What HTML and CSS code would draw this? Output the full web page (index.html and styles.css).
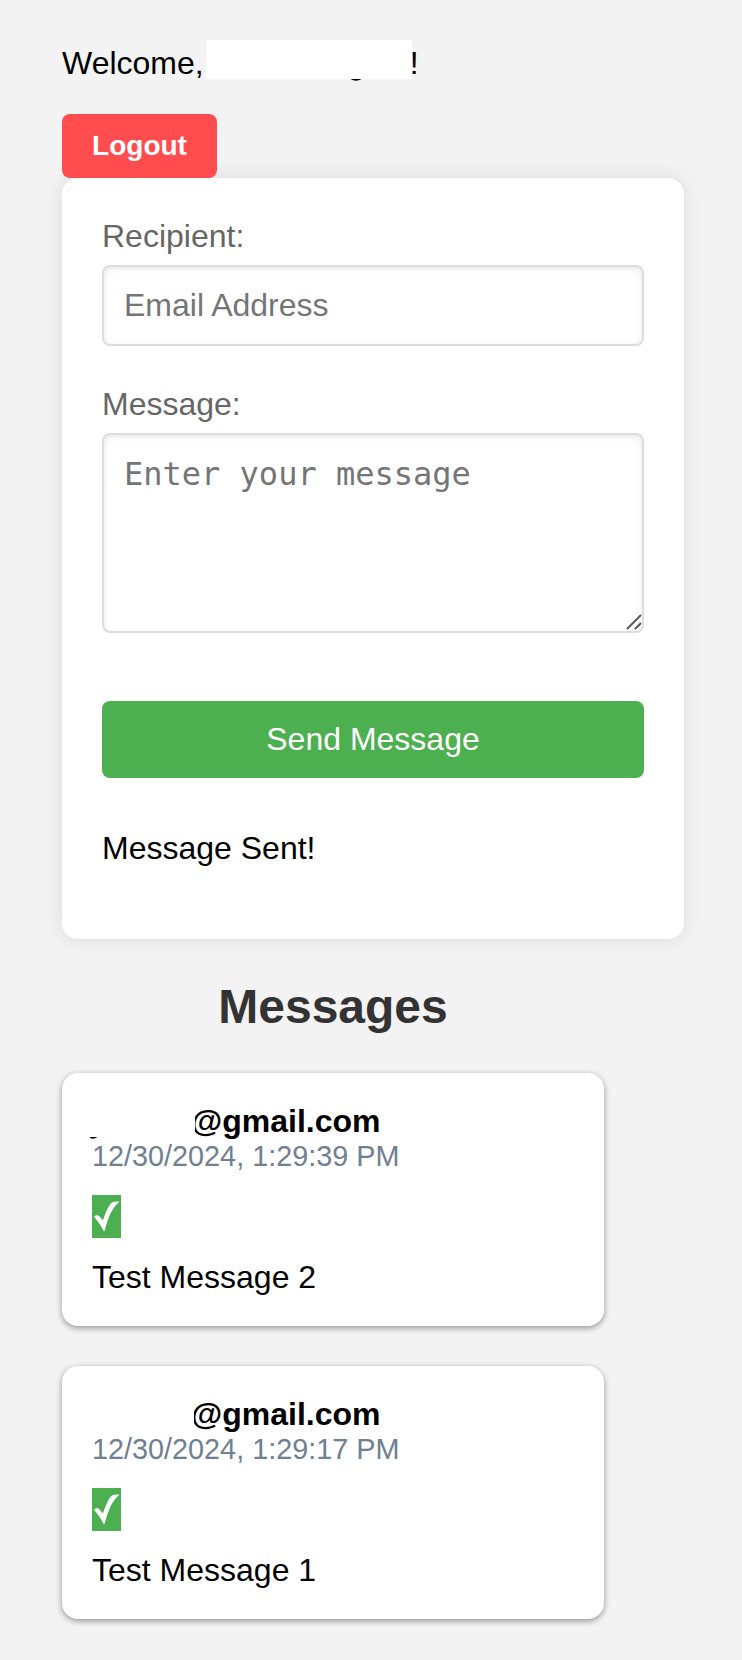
FILE: index.html
```html
<!DOCTYPE html>
<html lang="en">
<head>
<meta charset="utf-8">
<title>Messages</title>
<link rel="stylesheet" href="styles.css">
</head>
<body>
<header class="welcome"><span>Welcome,</span><span class="name-mask"><svg class="descender" width="12" height="3" viewBox="0 0 12 3"><path d="M0.5 0Q6 3.4 11.5 0Z"/></svg></span><span class="bang">!</span></header>
<button class="logout" type="button">Logout</button>
<form class="form-card">
  <label class="label" for="recipient">Recipient:</label>
  <input class="field" id="recipient" type="text" placeholder="Email Address">
  <label class="label" for="message">Message:</label>
  <div class="area">
    <textarea class="field field-area" id="message" placeholder="Enter your message"></textarea>
    <svg class="grip" width="16" height="16" viewBox="0 0 16 16"><path d="M1 15L15 1M9 15L15 9"/></svg>
  </div>
  <button class="send" type="button">Send Message</button>
  <p class="status">Message Sent!</p>
</form>
<main class="messages">
  <h2 class="heading">Messages</h2>
  <article class="message">
    <div class="sender"><span class="sender-mask"></span>@gmail.com<svg class="tail" width="8" height="2" viewBox="0 0 8 2"><path d="M0 0H7.5Q3 3 0 1Z"/></svg></div>
    <time class="time">12/30/2024, 1:29:39 PM</time>
    <div class="check"><svg width="29" height="43" viewBox="0 0 29 43"><path d="M1.8 21.8C3.5 19.7 6 19.8 7.3 21.2L11 25.2C13.3 18.5 15.5 12.5 18.5 9C20.5 6.7 23.5 6.3 27.5 6.8C20.5 12.5 16.5 21 12.6 36H11.6C9 30.5 5.5 25.5 1.8 21.8Z"/></svg></div>
    <p class="text">Test Message 2</p>
  </article>
  <article class="message">
    <div class="sender"><span class="sender-mask sender-mask-short"></span>@gmail.com</div>
    <time class="time">12/30/2024, 1:29:17 PM</time>
    <div class="check"><svg width="29" height="43" viewBox="0 0 29 43"><path d="M1.8 21.8C3.5 19.7 6 19.8 7.3 21.2L11 25.2C13.3 18.5 15.5 12.5 18.5 9C20.5 6.7 23.5 6.3 27.5 6.8C20.5 12.5 16.5 21 12.6 36H11.6C9 30.5 5.5 25.5 1.8 21.8Z"/></svg></div>
    <p class="text">Test Message 1</p>
  </article>
</main>
</body>
</html>
```
FILE: styles.css
```css
* { box-sizing: border-box; }
html { background: #f3f3f3; }
body {
  margin: 0;
  padding: 45px 58px 0 62px;
  min-height: 1660px;
  background: #f3f3f3;
  color: #000;
  font: 32px/37px "Liberation Sans", Arial, sans-serif;
}
p, h2 { margin: 0; }
.welcome { display: flex; height: 37px; }
.name-mask {
  position: relative;
  width: 206px;
  height: 39px;
  margin: -5px 0 0 2px;
  background: #fff;
}
.descender { position: absolute; left: 144px; top: 39px; }
.bang { margin-left: -2px; }
.logout {
  position: relative;
  z-index: 1;
  display: block;
  margin: 32px 0 0;
  padding: 16px 0;
  width: 155px;
  height: 64px;
  border: 0;
  border-radius: 8px;
  background: #ff4d4f;
  color: #fff;
  font: bold 28px/32px "Liberation Sans", Arial, sans-serif;
}
.form-card {
  display: flex;
  flex-direction: column;
  height: 761px;
  padding: 40px;
  border-radius: 16px;
  background: #fff;
  box-shadow: 0 0 20px rgba(0, 0, 0, .1);
}
.label { margin-bottom: 10px; color: #666; }
.field {
  display: block;
  width: 100%;
  height: 81px;
  margin: 0 0 40px;
  padding: 20px;
  border: 2px solid #ddd;
  border-radius: 8px;
  outline: 0;
  background: #fff;
  box-shadow: inset 0 2px 6px rgba(0, 0, 0, .1);
  font: 32px/37px "Liberation Sans", Arial, sans-serif;
}
.field::placeholder { color: #757575; opacity: 1; }
.area { position: relative; height: 200px; }
.field-area {
  height: 200px;
  margin: 0;
  padding-top: 21px;
  resize: none;
  font-family: "DejaVu Sans Mono", monospace;
}
.grip {
  position: absolute;
  right: 2px;
  bottom: 3px;
  fill: none;
  stroke: #555;
  stroke-width: 1.8;
}
.send {
  height: 77px;
  margin: 68px 0 52px;
  padding: 20px;
  border: 0;
  border-radius: 8px;
  background: #4caf50;
  color: #fff;
  font: 32px/37px "Liberation Sans", Arial, sans-serif;
}
.messages { width: 542px; padding-top: 40px; }
.heading {
  margin-bottom: 39px;
  color: #333;
  text-align: center;
  font-size: 48px;
  line-height: 55px;
}
.message {
  height: 253px;
  margin-bottom: 40px;
  padding: 30px;
  border-radius: 16px;
  background: #fff;
  box-shadow: 0 2px 6px rgba(0, 0, 0, .4);
}
.sender { position: relative; padding-left: 99px; font-weight: bold; }
.sender-mask {
  position: absolute;
  left: 0;
  top: 0;
  width: 103px;
  height: 36px;
  background: #fff;
}
.sender-mask-short { width: 102px; }
.tail { position: absolute; left: -2px; top: 34px; }
.time {
  display: block;
  color: #708090;
  font-size: 28.8px;
  line-height: 33px;
}
.check { width: 29px; height: 43px; margin: 22px 0 21px; background: #4caf50; }
.check svg { display: block; fill: #fff; }
```
